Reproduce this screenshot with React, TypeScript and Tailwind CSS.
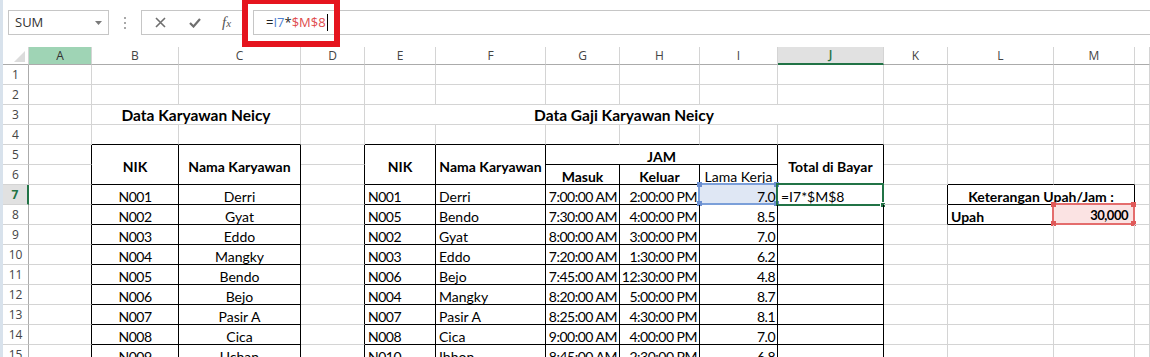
import React from "react";

type Cell = {
  t?: string;
  a?: "l" | "c" | "r";
  b?: boolean;
  cs?: number;
  rs?: number;
  n?: boolean; // numeric-ish text, drawn a little tighter
  title?: boolean;
};

const letters = ["A", "B", "C", "D", "E", "F", "G", "H", "I", "J", "K", "L", "M", ""];

const karyawan = [
  ["N001", "Derri"],
  ["N002", "Gyat"],
  ["N003", "Eddo"],
  ["N004", "Mangky"],
  ["N005", "Bendo"],
  ["N006", "Bejo"],
  ["N007", "Pasir A"],
  ["N008", "Cica"],
  ["N009", "Uchan"],
];

const gaji = [
  ["N001", "Derri", "7:00:00 AM", "2:00:00 PM", "7.0"],
  ["N005", "Bendo", "7:30:00 AM", "4:00:00 PM", "8.5"],
  ["N002", "Gyat", "8:00:00 AM", "3:00:00 PM", "7.0"],
  ["N003", "Eddo", "7:20:00 AM", "1:30:00 PM", "6.2"],
  ["N006", "Bejo", "7:45:00 AM", "12:30:00 PM", "4.8"],
  ["N004", "Mangky", "8:20:00 AM", "5:00:00 PM", "8.7"],
  ["N007", "Pasir A", "8:25:00 AM", "4:30:00 PM", "8.1"],
  ["N008", "Cica", "9:00:00 AM", "4:00:00 PM", "7.0"],
  ["N010", "Ibhon", "8:45:00 AM", "2:30:00 PM", "6.8"],
];

// cell specs keyed "row-col", col 0 = A
const specs: Record<string, Cell> = {
  "3-1": { t: "Data Karyawan Neicy", a: "c", b: true, cs: 2, title: true },
  "3-4": { t: "Data Gaji Karyawan Neicy", a: "c", b: true, cs: 6, title: true },
  "5-1": { t: "NIK", a: "c", b: true, rs: 2 },
  "5-2": { t: "Nama Karyawan", a: "c", b: true, rs: 2 },
  "5-4": { t: "NIK", a: "c", b: true, rs: 2 },
  "5-5": { t: "Nama Karyawan", a: "c", b: true, rs: 2 },
  "5-6": { t: "JAM", a: "c", b: true, cs: 3 },
  "5-9": { t: "Total di Bayar", a: "c", b: true, rs: 2 },
  "6-6": { t: "Masuk", a: "c", b: true },
  "6-7": { t: "Keluar", a: "c", b: true },
  "6-8": { t: "Lama Kerja", a: "c" },
  "7-9": { t: "=I7*$M$8", a: "l" },
  "7-11": { t: "Keterangan Upah/Jam :", a: "c", b: true, cs: 2 },
  "8-11": { t: "Upah", a: "l", b: true },
  "8-12": { t: "30,000", a: "r", b: true, n: true },
};

karyawan.forEach((k, i) => {
  specs[`${7 + i}-1`] = { t: k[0], a: "c", n: true };
  specs[`${7 + i}-2`] = { t: k[1], a: "c" };
});
gaji.forEach((g, i) => {
  const r = 7 + i;
  specs[`${r}-4`] = { t: g[0], a: "l", n: true };
  specs[`${r}-5`] = { t: g[1], a: "l" };
  specs[`${r}-6`] = { t: g[2], a: "r", n: true };
  specs[`${r}-7`] = { t: g[3], a: "r", n: true };
  specs[`${r}-8`] = { t: g[4], a: "r", n: true };
});

const inTable = (r: number, c: number) =>
  (r >= 5 && (c === 1 || c === 2)) ||
  (r >= 5 && c >= 4 && c <= 9) ||
  (r >= 7 && r <= 8 && (c === 11 || c === 12));

const colSpan: Record<number, string> = { 2: "col-span-2", 3: "col-span-3", 6: "col-span-6" };
const alignCls = { l: "justify-start pl-[3px]", c: "justify-center", r: "justify-end pr-[2px]" };

const Corners = ({ color }: { color: string }) => (
  <>
    <span className={`absolute -left-[3px] -top-[3px] w-[5px] h-[5px] ${color}`} />
    <span className={`absolute -right-[3px] -top-[3px] w-[5px] h-[5px] ${color}`} />
    <span className={`absolute -left-[3px] -bottom-[3px] w-[5px] h-[5px] ${color}`} />
    <span className={`absolute -right-[3px] -bottom-[3px] w-[5px] h-[5px] ${color}`} />
  </>
);

const Toolbar = () => (
  <div className="relative h-[47px] shrink-0">
    <div className="flex pt-[10px] h-[35px]">
      <div className="ml-[5px] w-[101px] h-[25px] border border-[#c6c6c6] flex items-center pl-[6px] pr-[6px] justify-between">
        <span className="text-[13px] text-[#333] font-['Open_Sans',sans-serif]">SUM</span>
        <svg width="7" height="4" viewBox="0 0 7 4">
          <polygon points="0,0 7,0 3.5,4" fill="#7a7a7a" />
        </svg>
      </div>
      <div className="w-[32px] flex flex-col items-center justify-center gap-[3px]">
        <span className="w-[2px] h-[2px] bg-[#a8a8a8]" />
        <span className="w-[2px] h-[2px] bg-[#a8a8a8]" />
        <span className="w-[2px] h-[2px] bg-[#a8a8a8]" />
      </div>
      <div className="w-[107px] h-[25px] border border-[#c6c6c6] flex items-center">
        <svg className="ml-[13px]" width="11" height="11" viewBox="0 0 11 11">
          <path d="M1 1 L10 10 M10 1 L1 10" stroke="#6f6f6f" strokeWidth="1.6" />
        </svg>
        <svg className="ml-[23px]" width="12" height="10" viewBox="0 0 12 10">
          <path d="M1 5 L4.5 8.5 L11 1" stroke="#6f6f6f" strokeWidth="2.2" fill="none" />
        </svg>
        <span className="ml-[21px] font-['Liberation_Serif',serif] italic text-[15px] text-[#555] leading-none">
          f<span className="text-[11px]">x</span>
        </span>
      </div>
      <div className="ml-[5px] flex-1 h-[25px] border-y border-l border-[#c6c6c6] flex items-center pl-[12px] font-['Open_Sans',sans-serif] text-[13px]">
        <span className="text-[#222]">=</span>
        <span className="text-[#4f7fcf]">I7</span>
        <span className="text-[#222]">*</span>
        <span className="text-[#e04c4c]">$M$8</span>
        <span className="ml-[1px] w-px h-[17px] bg-black" />
      </div>
    </div>
    <div className="absolute left-[239px] top-[-2px] w-[98px] h-[49px] border-[6px] border-[#e5141e]" />
  </div>
);

const Sheet = () => {
  const covered = new Set<string>();
  const cells: React.ReactNode[] = [];

  // column header row
  cells.push(
    <div key="corner" className="relative border-r border-b border-r-[#d4d4d4] border-b-[#ababab]">
      <svg className="absolute right-[3px] bottom-[2px]" width="11" height="11" viewBox="0 0 11 11">
        <polygon points="11,0 11,11 0,11" fill="#dcdcdc" />
      </svg>
    </div>
  );
  letters.forEach((l, c) => {
    const sel = l === "J";
    const green = l === "A";
    cells.push(
      <div
        key={`h-${c}`}
        className={`flex items-center justify-center text-[12px] font-['Open_Sans',sans-serif] border-r border-r-[#d4d4d4] ${
          sel
            ? "bg-[#e1e1e1] text-[#217346] font-semibold border-b-2 border-b-[#217346]"
            : green
            ? "bg-[#9fd4b5] text-[#333] border-b border-b-[#ababab]"
            : "bg-white text-[#444] border-b border-b-[#ababab]"
        }`}
      >
        {l}
      </div>
    );
  });

  for (let r = 1; r <= 15; r++) {
    const selRow = r === 7;
    cells.push(
      <div
        key={`rh-${r}`}
        className={`flex items-center justify-center pt-[1px] text-[12px] font-['Open_Sans',sans-serif] border-b border-b-[#d4d4d4] ${
          selRow
            ? "bg-[#e1e1e1] text-[#217346] font-bold border-r-2 border-r-[#217346]"
            : "bg-white text-[#444] border-r border-r-[#ababab]"
        }`}
      >
        {r}
      </div>
    );
    for (let c = 0; c < 14; c++) {
      const key = `${r}-${c}`;
      if (covered.has(key)) continue;
      const s = specs[key] || {};
      const cs = s.cs || 1;
      const rs = s.rs || 1;
      for (let dr = 0; dr < rs; dr++)
        for (let dc = 0; dc < cs; dc++) covered.add(`${r + dr}-${c + dc}`);
      const c2 = c + cs - 1;
      const r2 = r + rs - 1;
      const rightBlack = inTable(r, c2) || inTable(r, c2 + 1);
      const bottomBlack = inTable(r2, c) || inTable(r2 + 1, c);
      const isI7 = r === 7 && c === 8;
      const isJ7 = r === 7 && c === 9;
      const isM8 = r === 8 && c === 12;
      cells.push(
        <div
          key={key}
          className={`relative flex items-center pt-[3px] whitespace-nowrap border-r border-b ${
            rightBlack ? "border-r-black" : "border-r-[#d4d4d4]"
          } ${bottomBlack ? "border-b-black" : "border-b-[#d4d4d4]"} ${s.b ? "font-bold" : ""} ${
            s.n ? "tracking-[-0.5px]" : ""
          } ${s.title ? "text-[15.5px]" : ""} ${alignCls[s.a || "l"]} ${cs > 1 ? colSpan[cs] : ""} ${
            rs > 1 ? "row-span-2" : ""
          } ${isI7 ? "bg-[#dfe7f4]" : isM8 ? "bg-[#fbe3e3] text-[13px] !pr-[6px]" : ""}`}
        >
          {s.t}
          {isI7 && (
            <div className="absolute left-[-2px] top-[-2px] right-[-1px] bottom-[-1px] border-2 border-[#7b9fd9]">
              <Corners color="bg-[#6c8fd0]" />
            </div>
          )}
          {isJ7 && (
            <div className="absolute left-[-2px] top-[-2px] right-[-1px] bottom-[-2px] border-2 border-[#217346]">
              <span className="absolute -right-[4px] -bottom-[4px] w-[6px] h-[6px] bg-[#217346] border border-white" />
            </div>
          )}
          {isM8 && (
            <div className="absolute left-[-2px] top-[-2px] right-[-1px] bottom-[-1px] border-2 border-[#e46d6d]">
              <Corners color="bg-[#e05a5a]" />
            </div>
          )}
        </div>
      );
    }
  }

  return (
    <div className="grid grid-cols-[26px_63px_87px_122px_64px_71px_110px_74px_80px_78px_106px_64px_106px_81px_1fr] grid-rows-[18px] auto-rows-[20px] font-['Lato','Liberation_Sans',sans-serif] text-[14px] text-black">
      {cells}
    </div>
  );
};

export default function App() {
  return (
    <div className="relative w-[1150px] h-[357px] overflow-hidden bg-white border-l-[3px] border-l-[#d8e2ec] flex flex-col">
      <Toolbar />
      <Sheet />
    </div>
  );
}
